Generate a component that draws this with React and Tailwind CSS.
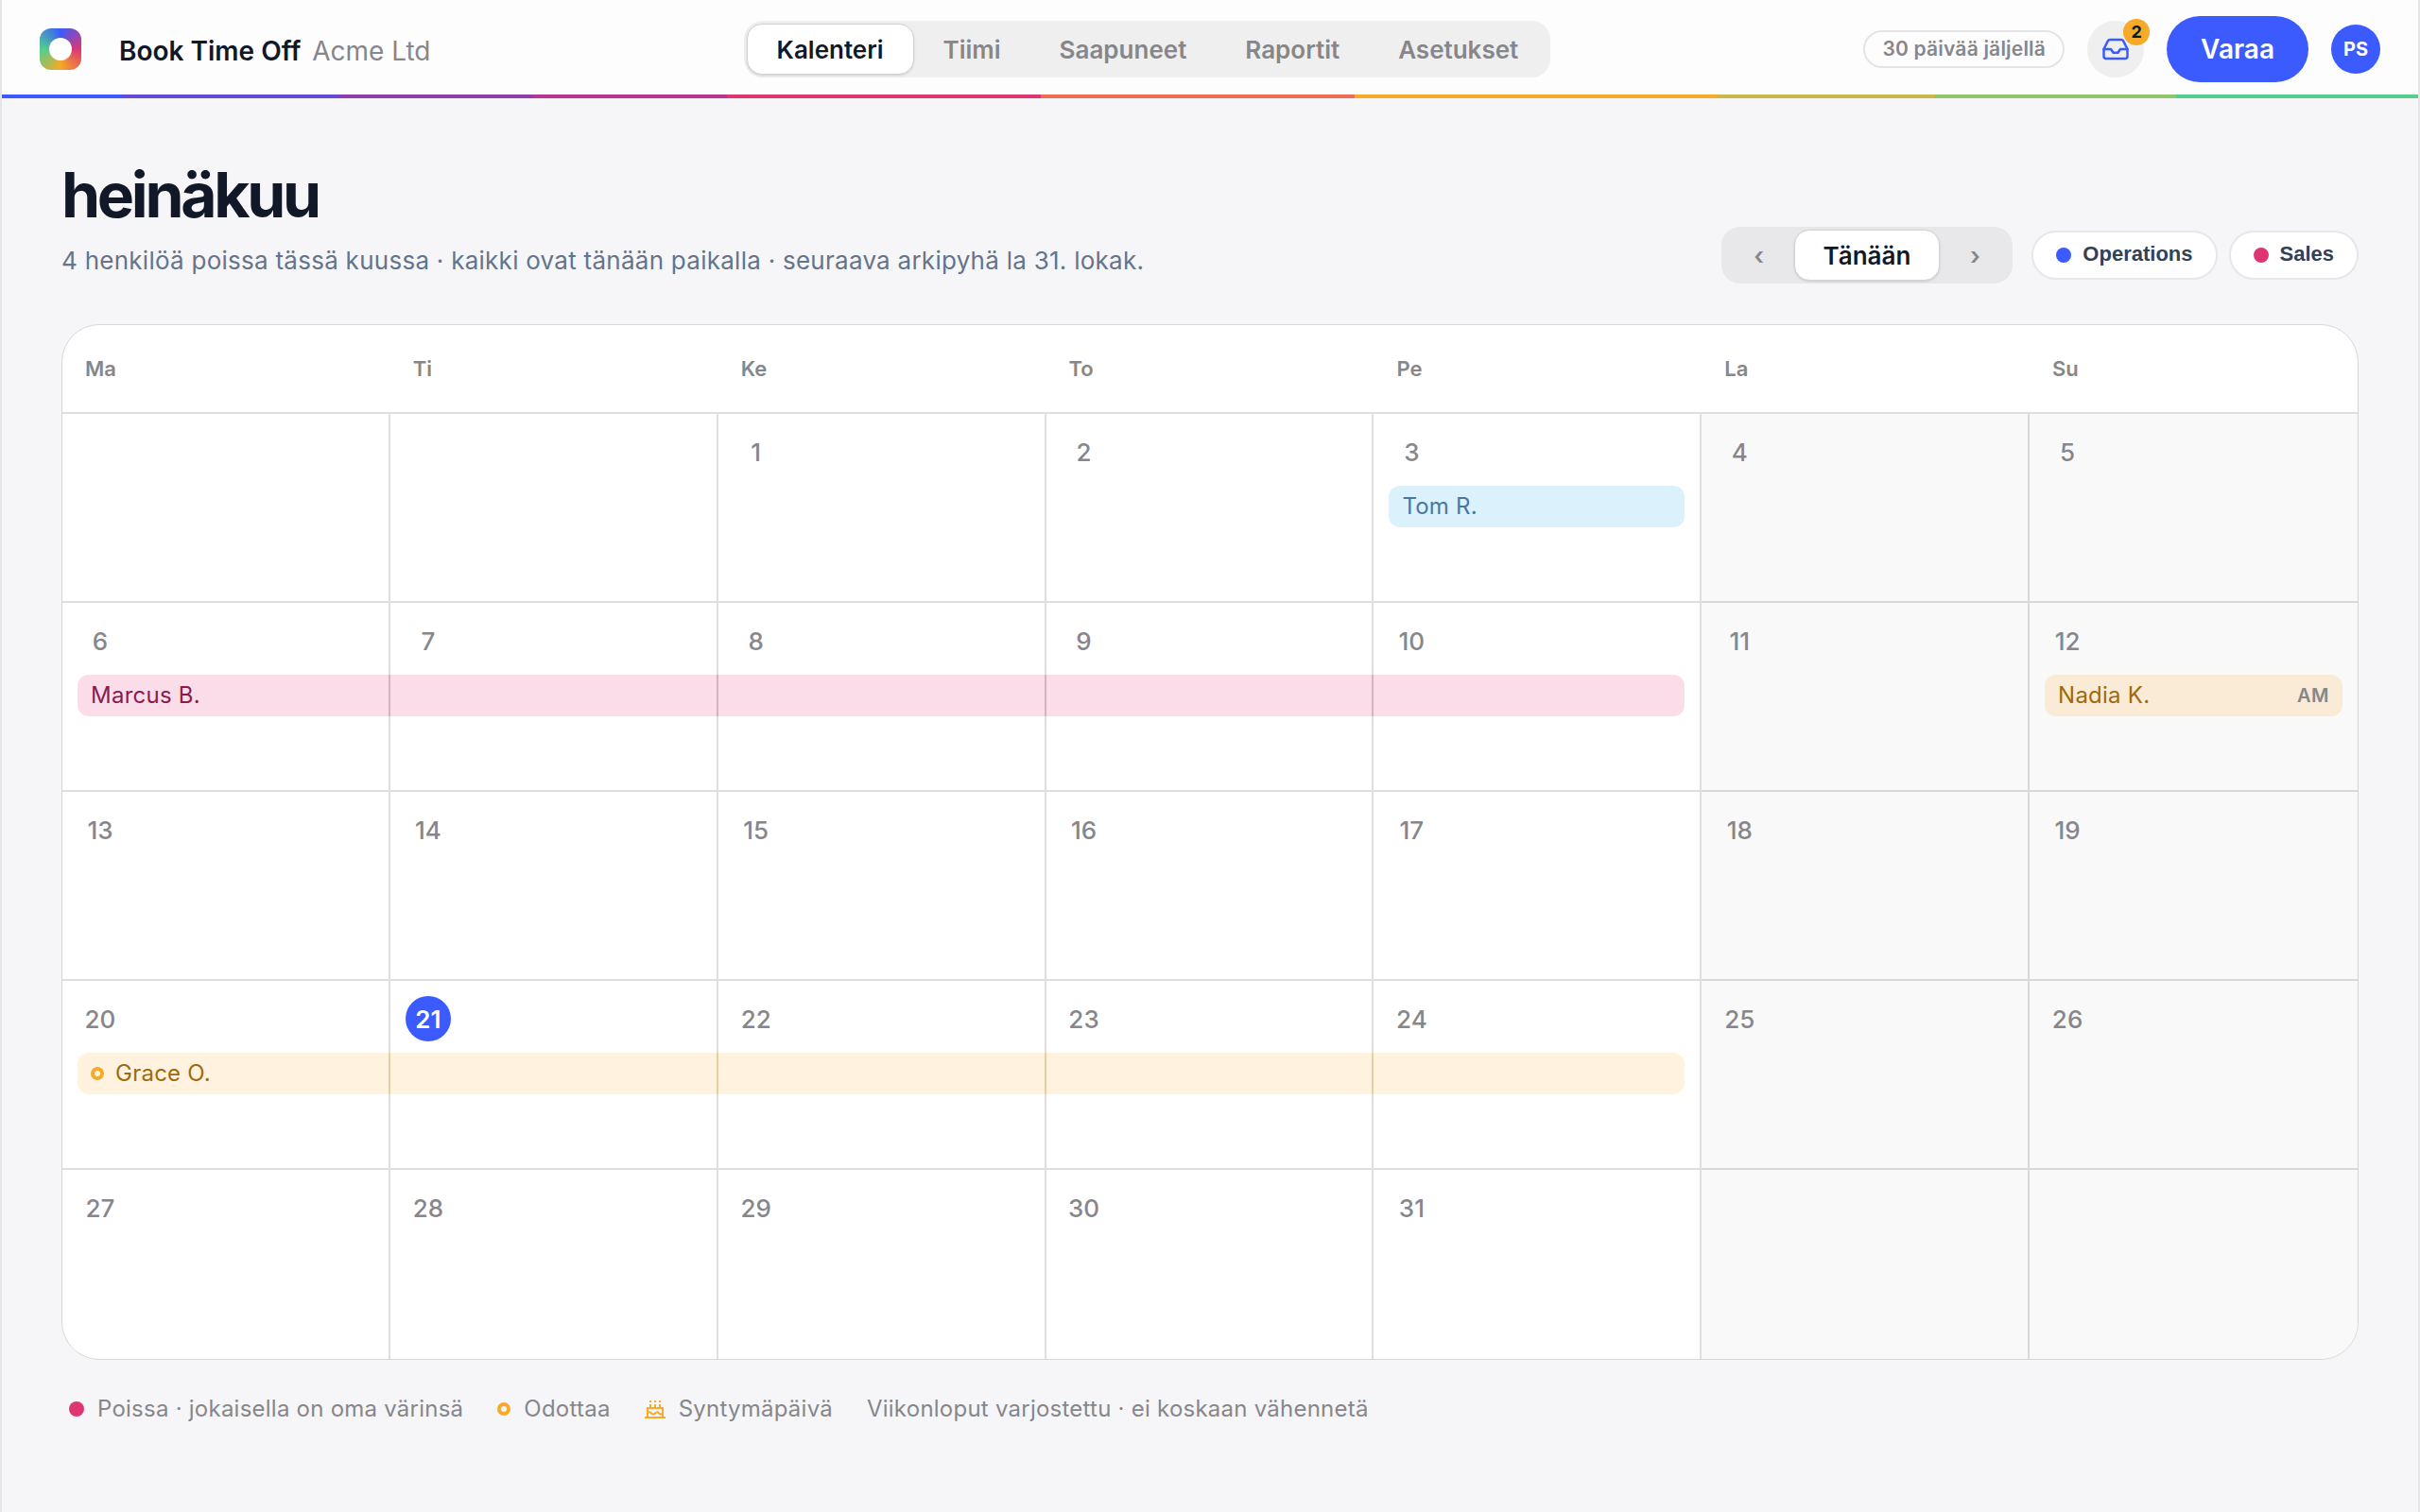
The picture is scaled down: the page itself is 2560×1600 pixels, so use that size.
import { Inbox } from "lucide-react";

/* -------------------- Data -------------------- */
const TABS = ["Kalenteri", "Tiimi", "Saapuneet", "Raportit", "Asetukset"];
const WEEKDAYS = ["Ma", "Ti", "Ke", "To", "Pe", "La", "Su"];
const TODAY = 21;

const WEEKS = [
  [null, null, 1, 2, 3, 4, 5],
  [6, 7, 8, 9, 10, 11, 12],
  [13, 14, 15, 16, 17, 18, 19],
  [20, 21, 22, 23, 24, 25, 26],
  [27, 28, 29, 30, 31, null, null],
];

const BOOKINGS = [
  { name: "Tom R.", from: 3, to: 3, tone: "bg-[#dbf1fc] text-[#4a76a0]" },
  {
    name: "Marcus B.",
    from: 6,
    to: 10,
    tone: "bg-[#fadde8] text-[#8b1a4f]",
    line: "border-[#d0b4c0]",
  },
  {
    name: "Nadia K.",
    from: 12,
    to: 12,
    tone: "bg-[#f9ebd5] text-[#a06a0c]",
    half: "AM",
  },
  {
    name: "Grace O.",
    from: 20,
    to: 24,
    tone: "bg-[#fff2df] text-[#a06a0c]",
    line: "border-[#e8cda2]",
    pending: true,
  },
];

/* -------------------- UI Components -------------------- */
function Logo() {
  return (
    <div className="flex size-11 items-center justify-center rounded-xl bg-[conic-gradient(#3b5bff,#dd3673_25%,#f7a928_50%,#52cf8b_75%,#3b5bff)]">
      <div className="size-6 rounded-full bg-white" />
    </div>
  );
}

function PendingRing() {
  return (
    <span className="size-[14px] shrink-0 rounded-full border-4 border-[#f7a928]" />
  );
}

function CakeIcon() {
  return (
    <svg
      viewBox="0 0 22 20"
      className="h-5 w-[22px]"
      fill="none"
      stroke="#f7a928"
      strokeWidth="2"
      aria-hidden="true"
    >
      <path d="M0 19h22M3 18V9h16v9" />
      <path d="M3 14.500c1.300-1.600 2.700-1.600 4 0s2.700 1.400 4 0 2.700-1.600 4 0 2.700 1.400 4 0" />
      <path d="M6 9V5M11 9V5M16 9V5M6 3V1M11 3V1M16 3V1" />
    </svg>
  );
}

function TeamPill({ dot, label }) {
  return (
    <button className="flex h-13 items-center gap-3 rounded-full border-2 border-[#e5e7eb] bg-white px-6 pb-1 font-['Liberation_Sans',sans-serif] text-[22px] font-bold text-[#334155]">
      <span className={`mt-1 size-4 rounded-full ${dot}`} />
      {label}
    </button>
  );
}

function Booking({ booking, day }) {
  const first = day === booking.from;
  const last = day === booking.to;

  return (
    <div
      className={`flex h-11 items-center gap-3 text-2xl tracking-[0.01em] ${booking.tone} ${
        first ? "ml-4 rounded-l-xl pl-[14px]" : ""
      } ${last ? "mr-4 rounded-r-xl pr-[14px]" : `border-r-2 ${booking.line}`} ${
        last ? "" : "-mr-0.5"
      }`}
    >
      {first && booking.pending && <PendingRing />}
      {first && <span>{booking.name}</span>}
      {booking.half && (
        <span className="ml-auto text-xl font-semibold tracking-wide text-[#86868b]">
          {booking.half}
        </span>
      )}
    </div>
  );
}

function DayCell({ day, column, lastRow }) {
  const booking = BOOKINGS.find((b) => day && day >= b.from && day <= b.to);
  const today = day === TODAY;

  return (
    <td
      className={`h-50 p-0 align-top ${lastRow ? "" : "border-b-2"} ${
        column < 6 ? "border-r-2" : ""
      } ${column > 4 ? "border-[#d9d9da] bg-[#f9f9f9]" : "border-[#dfdfe0]"}`}
    >
      <div className="flex h-[76px] pt-4 pl-4">
        {day && (
          <span
            className={`flex size-12 items-center justify-center rounded-full text-[26px] ${
              today
                ? "bg-[#3b5bff] font-semibold text-white"
                : "font-medium text-[#86868b]"
            }`}
          >
            {day}
          </span>
        )}
      </div>
      {booking && <Booking booking={booking} day={day} />}
    </td>
  );
}

/* -------------------- Layout -------------------- */
function Header() {
  return (
    <header className="bg-[#fdfdfd]">
      <div className="flex h-25 items-center justify-between px-10 pt-1">
        <div className="flex items-center gap-10">
          <Logo />
          <p className="pt-1 text-[28px] text-[#86868b]">
            <span className="mr-1 font-semibold text-[#111827]">
              Book Time Off
            </span>{" "}
            Acme Ltd
          </p>
        </div>

        <nav className="flex h-15 items-center rounded-[20px] bg-[#efefef] p-[3px] text-[26px] font-semibold">
          {TABS.map((tab, i) => (
            <a
              key={tab}
              href="#"
              className={`flex h-[54px] items-center rounded-2xl px-[31px] ${
                i === 0
                  ? "border border-[#d3d3d6] bg-white text-[#111827] shadow-sm"
                  : "text-[#86868b]"
              }`}
            >
              {tab}
            </a>
          ))}
        </nav>

        <div className="flex items-center justify-end gap-6">
          <span className="flex h-10 items-center rounded-full border-2 border-[#e4e4e6] px-[18px] text-[21px] font-semibold tracking-[0.01em] text-[#86868b]">
            30 päivää jäljellä
          </span>
          <button
            aria-label="Saapuneet"
            className="relative flex size-15 items-center justify-center rounded-full bg-[#efefef] text-[#3b5bff]"
          >
            <Inbox size={30} strokeWidth={2} />
            <span className="absolute -top-0.5 -right-[6px] flex size-7 items-center justify-center rounded-full bg-[#f7a928] text-lg font-bold text-[#111827]">
              2
            </span>
          </button>
          <button className="h-[70px] rounded-full bg-[#3b5bff] px-9 text-[28px] font-semibold text-white">
            Varaa
          </button>
          <button className="size-[52px] rounded-full bg-[#3b5bff] text-xl font-bold text-white">
            PS
          </button>
        </div>
      </div>
      <div className="h-1 bg-[linear-gradient(90deg,#3b5bff_5%,#654bd6_5%_14%,#8e3cb0_14%_22%,#b93591_22%_30%,#dd3673_30%_43%,#ec6f55_43%_56%,#f7a928_56%_71%,#c9b94a_71%_80%,#8fc768_80%_90%,#52cf8b_90%)]" />
    </header>
  );
}

function Toolbar() {
  return (
    <div className="flex items-end justify-between">
      <div className="pb-1">
        <h1 className="text-[66px] leading-[80px] font-bold tracking-tighter text-[#111827]">
          heinäkuu
        </h1>
        <p className="mt-[10px] text-[26px] leading-10 tracking-[0.01em] text-[#64748b]">
          4 henkilöä poissa tässä kuussa · kaikki ovat tänään paikalla · seuraava
          arkipyhä la 31. lokak.
        </p>
      </div>

      <div className="flex items-center gap-5">
        <div className="flex h-15 items-center rounded-[20px] bg-[#e8e8ea] p-[3px] text-[26px] font-semibold text-[#86868b]">
          <button aria-label="Edellinen" className="w-[74px]">
            ‹
          </button>
          <button className="h-[54px] rounded-2xl border border-[#d3d3d6] bg-white px-[30px] text-[#111827] shadow-sm">
            Tänään
          </button>
          <button aria-label="Seuraava" className="w-[74px]">
            ›
          </button>
        </div>
        <div className="flex gap-3">
          <TeamPill dot="bg-[#3b5bff]" label="Operations" />
          <TeamPill dot="bg-[#dd3673]" label="Sales" />
        </div>
      </div>
    </div>
  );
}

function Calendar() {
  return (
    <div className="overflow-hidden rounded-[40px] border border-[#d8d8da] bg-white">
      <table className="w-full table-fixed border-separate border-spacing-0">
        <thead>
          <tr>
            {WEEKDAYS.map((name) => (
              <th
                key={name}
                className="h-[94px] border-b-2 border-[#dfdfe0] pl-6 text-left text-[22px] font-semibold text-[#86868b]"
              >
                {name}
              </th>
            ))}
          </tr>
        </thead>
        <tbody>
          {WEEKS.map((week, row) => (
            <tr key={row}>
              {week.map((day, column) => (
                <DayCell
                  key={column}
                  day={day}
                  column={column}
                  lastRow={row === WEEKS.length - 1}
                />
              ))}
            </tr>
          ))}
        </tbody>
      </table>
    </div>
  );
}

function Legend() {
  return (
    <ul className="mt-8 flex items-center gap-9 pl-2 text-2xl leading-10 tracking-[0.01em] text-[#86868b]">
      <li className="flex items-center gap-[14px]">
        <span className="size-4 rounded-full bg-[#dd3673]" />
        Poissa · jokaisella on oma värinsä
      </li>
      <li className="flex items-center gap-[14px]">
        <PendingRing />
        Odottaa
      </li>
      <li className="flex items-center gap-[14px]">
        <CakeIcon />
        Syntymäpäivä
      </li>
      <li>Viikonloput varjostettu · ei koskaan vähennetä</li>
    </ul>
  );
}

export default function App() {
  return (
    <div className="min-h-screen border-x-2 border-[#e5e5e7] bg-[#f6f6f8] font-[Inter,sans-serif] [font-optical-sizing:none]">
      <Header />
      <main className="px-[63px] pt-[62px] pb-16">
        <Toolbar />
        <div className="mt-[43px]">
          <Calendar />
        </div>
        <Legend />
      </main>
    </div>
  );
}
